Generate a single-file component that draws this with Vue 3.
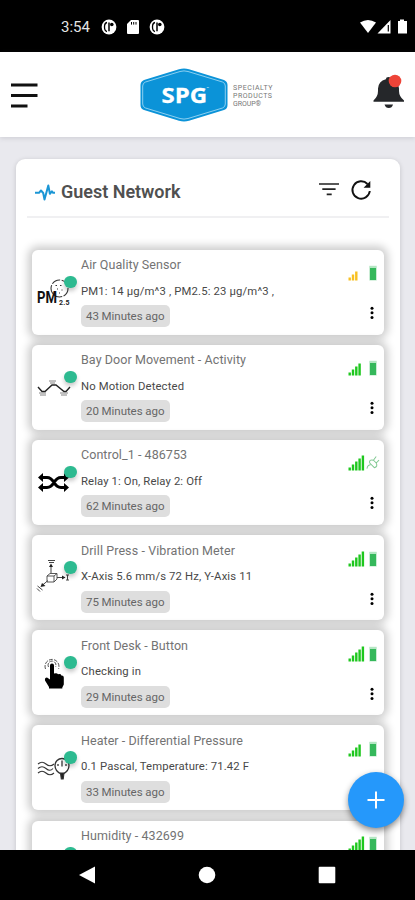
<script setup>
const devices = [
  { name: 'Air Quality Sensor', nw: 100, value: 'PM1: 14 µg/m^3 , PM2.5: 23 µg/m^3 ,', vw: 193, ago: '43 Minutes ago', icon: 'pm', bars: 3, color: '#f8c022', power: 'battery' },
  { name: 'Bay Door Movement - Activity', nw: 165, value: 'No Motion Detected', vw: 103, ago: '20 Minutes ago', icon: 'motion', bars: 4, color: '#1fc71f', power: 'battery' },
  { name: 'Control_1 - 486753', nw: 106, value: 'Relay 1: On, Relay 2: Off', vw: 121, ago: '62 Minutes ago', icon: 'relay', bars: 5, color: '#1fc71f', power: 'plug' },
  { name: 'Drill Press - Vibration Meter', nw: 154, value: 'X-Axis 5.6 mm/s 72 Hz, Y-Axis 11', vw: 171, ago: '75 Minutes ago', icon: 'axis', bars: 5, color: '#1fc71f', power: 'battery' },
  { name: 'Front Desk - Button', nw: 107, value: 'Checking in', vw: 60, ago: '29 Minutes ago', icon: 'button', bars: 5, color: '#1fc71f', power: 'battery' },
  { name: 'Heater - Differential Pressure', nw: 162, value: '0.1 Pascal, Temperature: 71.42 F', vw: 168, ago: '33 Minutes ago', icon: 'pressure', bars: 4, color: '#1fc71f', power: 'battery' },
  { name: 'Humidity - 432699', nw: 103, value: '', vw: 0, ago: '', icon: 'none', bars: 5, color: '#1fc71f', power: 'battery' },
]
</script>

<template>
  <div class="phone">
    <div class="status">
      <span class="clock">3:54</span>
      <svg class="s-round" viewBox="0 0 16 16"><circle cx="8" cy="8" r="7.4" fill="#fff"/><path d="M6 3.500Q3.500 4 3.500 8T6 12.500" fill="none" stroke="#000" stroke-width="1.300"/><path d="M8 3.500v8.800" stroke="#000" stroke-width="1.500"/><circle cx="10.800" cy="5.500" r="1.800"/></svg>
      <svg class="s-card" viewBox="0 0 12 14"><path d="M4 0h7q1 0 1 1v12q0 1-1 1H1q-1 0-1-1V4z" fill="#fff"/><path d="M4.5 2v2.6M6.7 2v2.6M9 2v2.6" stroke="#000" stroke-width="1"/></svg>
      <svg class="s-round" viewBox="0 0 16 16"><circle cx="8" cy="8" r="7.4" fill="#fff"/><path d="M6 3.500Q3.500 4 3.500 8T6 12.500" fill="none" stroke="#000" stroke-width="1.300"/><path d="M8 3.500v8.800" stroke="#000" stroke-width="1.500"/><circle cx="10.800" cy="5.500" r="1.800"/></svg>
      <svg class="s-right" viewBox="0 0 48 16"><path d="M0 3.500Q8-1.500 16 3.500L8 14z" fill="#fff"/><path d="M30.500 1v13.500H17.500z" fill="#fff"/><path d="M28.300 6v6.500" stroke="#000" stroke-width="1.200"/><path d="M38 2h2V.5h4V2h3v12.500h-9z" fill="#fff"/></svg>
    </div>

    <header class="top">
      <svg class="menu" viewBox="0 0 27 26"><path d="M0 2h26.5M0 12.5h26.5M0 23h16.5" stroke="#111" stroke-width="3.2"/></svg>
      <svg class="logo" viewBox="0 0 134 54">
        <path d="M39 1.2Q44-.2 49 1.2L84 12Q87.500 13.500 87.500 17V37Q87.500 41 84 42L49 52.800Q44 54.200 39 52.800L4 42Q.5 41 .5 37V17Q.5 13.500 4 12z" fill="#0b93d8"/>
        <path d="M40 3.500Q44 2.300 48 3.500L82.500 14Q85.300 15 85.300 18V36Q85.300 39 82.500 40L48 50.500Q44 51.700 40 50.500L5.500 40Q2.700 39 2.700 36V18Q2.700 15 5.500 14z" fill="none" stroke="#9ad6f3" stroke-width=".9"/>
        <text x="21.500" y="35" class="spg" textLength="45.500" lengthAdjust="spacingAndGlyphs">SPG</text>
        <text x="66.500" y="22" class="tm">™</text>
        <g class="tag"><text x="93" y="22" textLength="39.500">SPECIALTY</text><text x="93" y="30" textLength="39">PRODUCTS</text><text x="93" y="38" textLength="28">GROUP®</text></g>
      </svg>
      <svg class="bell" viewBox="0 0 34 36"><path d="M1.500 27.500Q6 23.500 6 18V15.500Q6.500 8 13.800 6.200Q14 4 16.500 4T19.200 6.200Q26.500 8 27 15.500V18q0 5.500 5 9.500v1.200h-30.500z" fill="#25272a"/><path d="M12.500 31.500h8.500q-1 3.500-4.200 3.500t-4.300-3.500z" fill="#25272a"/><circle cx="23" cy="8" r="6.300" fill="#ee4438"/></svg>
    </header>

    <main class="body">
      <section class="panel">
        <div class="heading">
          <svg class="pulse" viewBox="0 0 22 20"><path d="M1 10.800h4l2-2.300 2.200 2.500 1.300 6.500L14.300 3.500l1.600 8.300 2-2.500 1.200 1.500H21" fill="none" stroke="#1b96d5" stroke-width="2" stroke-linejoin="round"/></svg>
          <svg class="title" viewBox="0 0 124 24"><text x="0" y="18" textLength="119.500">Guest Network</text></svg>
          <svg class="filter" viewBox="0 0 20 14"><path d="M0 2h20M3.300 7.200h13.300M7.700 12.400h5" stroke="#222" stroke-width="1.700"/></svg>
          <svg class="refresh" viewBox="0 0 22 22"><path d="M17.500 5A8.700 8.700 0 1 0 19.800 12" fill="none" stroke="#111" stroke-width="1.900"/><path d="M20.300 2v6.700h-6.700z" fill="#111"/></svg>
        </div>

        <div class="list">
          <article v-for="d in devices" :key="d.name" class="device">
            <div class="pic">
              <svg class="glyph" viewBox="0 0 36 36">
                <g v-if="d.icon === 'pm'"><circle cx="23.500" cy="13.500" r="8.500" fill="none" stroke="#333" stroke-width="1.100" stroke-dasharray="9 1.500"/><path d="M19.500 10.500h1.500M24 10.500h1.500M21 14h1M25.500 15h1M23 18h1" stroke="#333" stroke-width="1.200" fill="none"/><text x="1" y="27.500" class="pm" textLength="20" lengthAdjust="spacingAndGlyphs">PM</text><text x="23" y="30" class="pm25" textLength="10.500">2.5</text></g>
                <g v-if="d.icon === 'motion'" fill="none" stroke="#222"><path d="M2 17l4 4.500h3l7-6.500h4l8 6.500h2l4-4.500" stroke-width="1.400"/><path d="M3 23h7M4 25h6M13 11h7M14 13h5M24 23h8M25 25h6" stroke="#777" stroke-width=".9"/></g>
                <g v-if="d.icon === 'relay'"><path d="M5 12.500h6q4 0 7 5t7 5h4M5 22.500h6q4 0 7-5t7-5h4" fill="none" stroke="#000" stroke-width="3"/><path d="M7 8v9l-5-4.500zM7 18v9l-5-4.500zM28 8v9l5-4.500zM28 18v9l5-4.500z"/></g>
                <g v-if="d.icon === 'axis'" fill="none" stroke="#444"><path d="M11 16l3-2.500h7v5.500l-3 3h-7zM11 16h7l3-2.500M18 16v6" stroke-width=".9"/><path d="M15 13V5M13 2.500h5M12 .5h7M21 17.500h8M12 20.500l-6 5M1.500 26l5 4M1 28.500l3 3M31.500 15v5M30 15h3M30 20h3" stroke-width="1"/><path d="M13 7h4l-2-3.500zM26 15.500v4l3.500-2zM6 23l3.500 3-5 1z" fill="#222" stroke="none"/></g>
                <g v-if="d.icon === 'button'"><path d="M9.500 14a7 7 0 1 1 13 0M12.500 12a4 4 0 1 1 7 0" fill="none" stroke="#555" stroke-width="1" stroke-dasharray="4 1.200"/><path d="M14 10.500q0-2 2-2t2 2v8q3-1 4 .7 3-.7 3.300 1.300 2.500-.3 2.500 2v7l-1.500 3v1H13v-1.500l-4-6.500q-.5-3 2-3l3 2z"/></g>
                <g v-if="d.icon === 'pressure'" fill="none" stroke="#333" stroke-width="1.100"><path d="M2 14q4-3.500 8 0t8 0M2 18.500q4-3.500 8 0t7 0M2 23q4-3.500 8 0t8 0"/><path d="M25 24q-6-3-6-8.500a7 7 0 1 1 14 0q0 5.500-6 8.500zM26 10.500v6M22 14v2M30 14v2" stroke-width="1.300"/><path d="M24.500 23h3.500l-.8 6h-1.900z" fill="#222"/></g>
              </svg>
              <span class="dot"></span>
            </div>
            <div class="info">
              <svg class="name" viewBox="0 0 220 18"><text x="0" y="12.500" :textLength="d.nw">{{ d.name }}</text></svg>
              <svg class="value" viewBox="0 0 220 18"><text v-if="d.value" x="0" y="12.500" :textLength="d.vw">{{ d.value }}</text></svg>
              <span class="ago"><svg viewBox="0 0 80 18"><text v-if="d.ago" x="0" y="13" textLength="78.500">{{ d.ago }}</text></svg></span>
            </div>
            <div class="state">
              <div class="levels">
                <svg class="signal" viewBox="0 0 18 16"><rect v-for="b in d.bars" :key="b" :x="(b - 1) * 3.300 + .5" :y="15.500 - b * 3" width="2.400" :height="b * 3" :fill="d.color"/></svg>
                <svg v-if="d.power === 'battery'" class="power" viewBox="0 0 10 16"><rect x="1.300" y=".8" width="7.400" height="14.700" fill="#b4e6c3"/><rect x="2" y="3" width="6" height="12" fill="#35b85b"/></svg>
                <svg v-else class="power plug" viewBox="0 0 14 16"><path d="M1 14q1-4 4-4M4 8l5 5q4-1 2-5L8 5Q3 4 4 8zM8 5l3-4M11 8l3-3" fill="none" stroke="#82c993" stroke-width="1.100"/></svg>
              </div>
              <svg class="dots" viewBox="0 0 4 14"><circle cx="2" cy="2.200" r="1.500"/><circle cx="2" cy="6.800" r="1.500"/><circle cx="2" cy="11.400" r="1.500"/></svg>
            </div>
          </article>
        </div>
      </section>
      <button class="fab" aria-label="+"><svg viewBox="0 0 18 18"><path d="M9 .5v17M.5 9h17" stroke="#fff" stroke-width="2"/></svg></button>
    </main>

    <nav class="nav">
      <svg viewBox="0 0 18 18"><path d="M17 .5v17L1 9z" fill="#fff"/></svg>
      <svg viewBox="0 0 18 18"><circle cx="9" cy="9" r="8.300" fill="#fff"/></svg>
      <svg viewBox="0 0 18 18"><rect x=".7" y=".7" width="16.600" height="16.600" rx="1" fill="#fff"/></svg>
    </nav>
  </div>
</template>

<style>
body { background: #000; overflow: hidden; }
</style>

<style scoped>
* { box-sizing: border-box; }
svg { display: block; flex: none; overflow: visible; }
.phone { width: 415px; height: 900px; display: flex; flex-direction: column; overflow: hidden; font-family: Roboto, sans-serif; background: #e9e9ee; }
.status { height: 52px; flex: none; background: #000; display: flex; align-items: center; padding: 2px 7px 0 61px; }
.clock { color: #e5e5e5; font-size: 15px; line-height: 20px; width: 39.500px; }
.s-round { width: 16px; height: 16px; }
.s-card { width: 12px; height: 14px; margin: 0 10px 0 10px; }
.s-right { width: 48px; height: 16px; margin-left: auto; }
.top { height: 85px; flex: none; background: #fff; display: flex; align-items: flex-start; justify-content: space-between; padding: 0 9px 0 11px; z-index: 1; box-shadow: 0 1px 5px rgba(70, 70, 90, .18); }
.menu { width: 27px; height: 26px; margin-top: 30.500px; }
.logo { width: 134px; height: 54px; margin: 16px 0 0 3px; }
.bell { width: 34px; height: 36px; margin-top: 21px; }
.spg { font: 700 22px "Open Sans", sans-serif; fill: #fff; stroke: #fff; stroke-width: .3; }
.tm { font-size: 4px; fill: #fff; }
.tag { font-size: 7px; fill: #777; }
.pm { font-size: 17px; font-weight: 700; fill: #111; }
.pm25 { font-size: 7px; font-weight: 700; fill: #222; }
.body { flex: 1; min-height: 0; overflow: hidden; padding: 22px 15px 0 16px; position: relative; }
.panel { height: 760px; background: #fff; border-radius: 9px 9px 0 0; padding: 0 16px; box-shadow: 0 1px 5px rgba(0, 0, 0, .16); }
.heading { height: 59px; display: flex; align-items: center; margin: 0 -5px; padding: 8px 17px 0 7px; border-bottom: 2px solid #f0f0f2; }
.pulse { width: 22px; height: 20px; }
.title { width: 124px; height: 24px; margin-left: 5px; font-size: 18px; font-weight: 600; fill: #505050; }
.filter { width: 20px; height: 14px; margin: -5px 11px 0 auto; }
.refresh { width: 22px; height: 22px; margin-top: -4px; }
.list { display: flex; flex-direction: column; gap: 10.200px; padding-top: 31.500px; }
.device { height: 85px; flex: none; background: #fff; border-radius: 6px; display: flex; padding-left: 4px; box-shadow: 0 0 9px 4px rgba(0, 0, 0, .2); }
.pic { width: 45px; flex: none; position: relative; padding-top: 25px; }
.glyph { width: 36px; height: 36px; }
.dot { position: absolute; left: 28px; top: 26px; width: 12.500px; height: 12.500px; border-radius: 50%; background: #2dba90; box-shadow: 0 3px 4px rgba(0, 0, 0, .22); }
.info { width: 220px; flex: none; padding-top: 6.500px; }
.name { width: 220px; height: 18px; font-size: 12.500px; fill: #737373; }
.value { width: 220px; height: 18px; font-size: 11.300px; fill: #484848; margin-top: 7.500px; }
.ago { display: block; width: 89px; height: 22px; background: #dedede; border-radius: 5px; margin-top: 5.500px; padding: 2px 5px; }
.ago svg { width: 80px; height: 18px; font-size: 11.500px; fill: #666; }
.state { flex: 1; display: flex; flex-direction: column; align-items: flex-end; padding: 15.500px 6px 0 0; }
.levels { display: flex; gap: 2px; width: 30.500px; }
.signal { width: 18px; height: 16px; }
.power { width: 10px; height: 16px; }
.plug { width: 13px; margin-left: -2px; }
.dots { width: 4px; height: 14px; margin: 25px 4px 0 0; }
.fab { position: absolute; left: 348px; top: 634.500px; width: 56px; height: 56px; border-radius: 50%; border: 0; background: #2598fb; padding: 19px; box-shadow: 0 3px 6px rgba(0, 0, 0, .45); }
.fab svg { width: 18px; height: 18px; }
.nav { height: 50px; flex: none; background: #000; display: flex; justify-content: space-between; padding: 16px 79px 0 78px; z-index: 2; }
.nav svg { width: 18px; height: 18px; }
</style>
